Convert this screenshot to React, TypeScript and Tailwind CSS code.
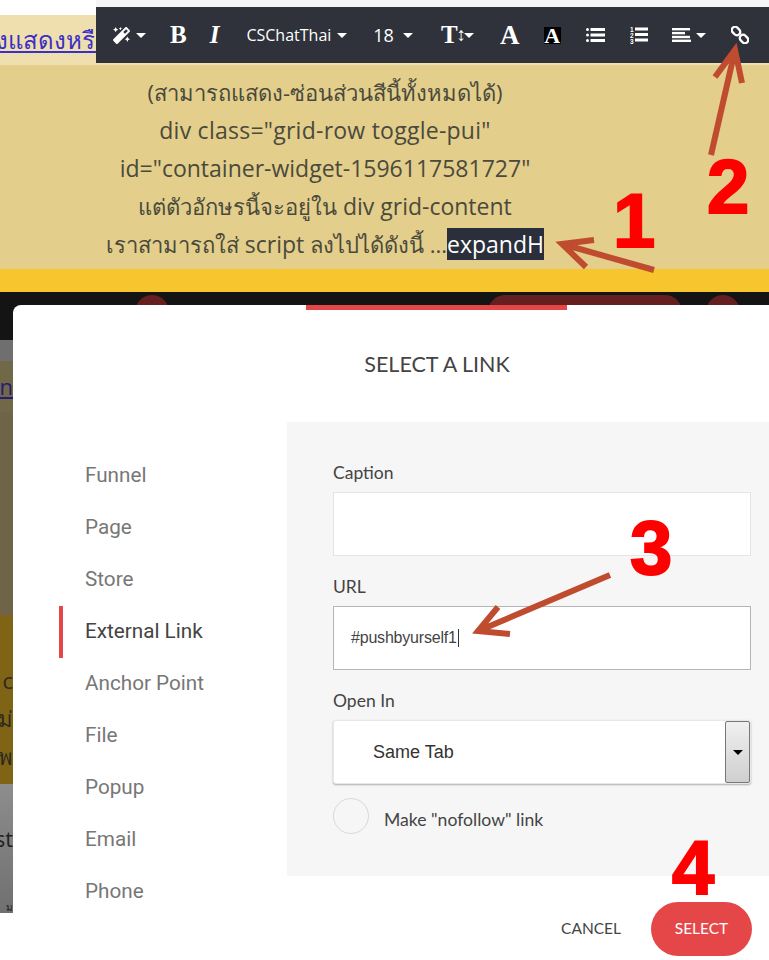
import { FaMagic } from "react-icons/fa";

const navItems = ["Funnel", "Page", "Store", "External Link", "Anchor Point", "File", "Popup", "Email", "Phone"];

function Caret({ className = "" }: { className?: string }) {
    return <span className={`inline-block h-0 w-0 border-x-[5px] border-t-[5px] border-x-transparent border-t-white ${className}`} />;
}

function ListUl({ className = "" }: { className?: string }) {
    return (
        <svg className={className} width="19" height="14" viewBox="0 0 19 14" fill="white">
            <rect x="0" y="0" width="3" height="3" rx="1.5" />
            <rect x="0" y="5.5" width="3" height="3" rx="1.5" />
            <rect x="0" y="11" width="3" height="3" rx="1.5" />
            <rect x="4.5" y="0" width="14.5" height="3" />
            <rect x="4.5" y="5.5" width="14.5" height="3" />
            <rect x="4.5" y="11" width="14.5" height="3" />
        </svg>
    );
}

function ListOl({ className = "" }: { className?: string }) {
    return (
        <svg className={className} width="18" height="18" viewBox="0 0 18 18" fill="white">
            <text x="0" y="5.5" fontSize="6.5" fontWeight="700" fontFamily="Liberation Sans">1</text>
            <text x="0" y="11.5" fontSize="6.5" fontWeight="700" fontFamily="Liberation Sans">2</text>
            <text x="0" y="17.5" fontSize="6.5" fontWeight="700" fontFamily="Liberation Sans">3</text>
            <rect x="5" y="1.5" width="13" height="3" />
            <rect x="5" y="7" width="13" height="3" />
            <rect x="5" y="12.5" width="13" height="3" />
        </svg>
    );
}

function AlignLeft({ className = "" }: { className?: string }) {
    return (
        <svg className={className} width="19" height="14" viewBox="0 0 19 14" fill="white">
            <rect x="0" y="0" width="18" height="2.4" />
            <rect x="0" y="3.9" width="13" height="2.4" />
            <rect x="0" y="7.8" width="18" height="2.4" />
            <rect x="0" y="11.6" width="19" height="2.4" />
        </svg>
    );
}

function LinkIcon({ className = "" }: { className?: string }) {
    return (
        <svg className={className} width="18" height="18" viewBox="0 0 18 18" fill="none" stroke="white" strokeWidth="2.4">
            <rect x="-4.6" y="-3.3" width="9.2" height="6.6" rx="3.3" transform="translate(5 5) rotate(45)" />
            <rect x="-4.6" y="-3.3" width="9.2" height="6.6" rx="3.3" transform="translate(13 13) rotate(45)" />
        </svg>
    );
}

function Toolbar() {
    return (
        <div className="absolute left-[96px] right-0 top-[7px] flex h-[56px] items-center bg-[#2f323b] text-white">
            <FaMagic className="ml-[17px] text-[17px]" />
            <Caret className="ml-[6px]" />
            <span className="ml-[24px] font-['Liberation_Serif'] text-[25px] font-bold">B</span>
            <span className="ml-[23px] font-['Liberation_Serif'] text-[25px] font-bold italic">I</span>
            <span className="ml-[27px] font-['Open_Sans'] text-[16px]">CSChatThai</span>
            <Caret className="ml-[6px]" />
            <span className="ml-[26px] font-['Open_Sans'] text-[18px]">18</span>
            <Caret className="ml-[9px]" />
            <span className="ml-[28px] font-['Liberation_Serif'] text-[25px] font-bold">T</span>
            <span className="-ml-[1px] font-['Liberation_Sans'] text-[19px] font-bold">↕</span>
            <Caret className="-ml-[2px]" />
            <span className="ml-[26px] font-['Liberation_Serif'] text-[27px] font-bold">A</span>
            <span className="ml-[24px] flex h-[17px] w-[17px] items-center justify-center overflow-hidden bg-black font-['Liberation_Serif'] text-[22px] font-bold">A</span>
            <ListUl className="ml-[25px]" />
            <ListOl className="ml-[25px]" />
            <AlignLeft className="ml-[24px]" />
            <Caret className="ml-[5px]" />
            <LinkIcon className="ml-[25px]" />
        </div>
    );
}

function Backdrop() {
    return (
        <div className="flex h-[573px] w-[13px] flex-col overflow-hidden font-['Open_Sans'] text-[22px] text-[#2c2a1c]">
            <div className="h-[21px] bg-[#6f6f6f]" />
            <div className="flex h-[51px] items-center justify-end bg-[#716848]">
                <span className="text-[#221c7a] underline">n</span>
            </div>
            <div className="h-[203px] bg-[#6f6448]" />
            <div className="flex h-[169px] flex-col items-end justify-center bg-[#7f6416] pt-[36px] leading-[38px]">
                <span>c</span>
                <span>ม่</span>
                <span>พ</span>
            </div>
            <div className="flex flex-1 flex-col items-end bg-gradient-to-b from-[#8d8d8d] to-[#707070] pt-[39px] text-[#222]">
                <span className="whitespace-nowrap leading-[30px]">st</span>
                <span className="mt-auto text-[10px] leading-[12px]">ม</span>
            </div>
        </div>
    );
}

function Field({ label, muted, children }: { label: string; muted?: boolean; children?: React.ReactNode }) {
    return (
        <div className="mb-[21px]">
            <div className="mb-[9px] h-5 font-['Lato'] text-[17.5px] leading-5 text-[#444]">{label}</div>
            <div className={`flex h-16 items-center border bg-white pl-[17px] ${muted ? "border-[#e5e5e5]" : "border-[#b5b5b5]"}`}>{children}</div>
        </div>
    );
}

function Modal() {
    return (
        <div className="absolute bottom-0 left-[13px] right-0 top-[305px] rounded-tl-lg bg-white">
            <div className="ml-[293px] h-[5px] w-[261px] bg-[#e54749]" />
            <div className="flex h-[112px] items-start justify-center pt-[41px] font-['Lato'] text-[21.5px] leading-[26px] text-[#444]">
                <span className="ml-[92px]">SELECT A LINK</span>
            </div>
            <div className="flex h-[454px] items-start">
                <nav className="w-[274px] pl-[46px] pt-[28px] font-['Roboto'] text-[20.7px]">
                    {navItems.map((item) => (
                        <div
                            key={item}
                            className={`flex h-[52px] items-center border-l-4 pl-[22px] ${
                                item === "External Link" ? "border-[#e54749] text-[#444]" : "border-transparent text-[#777]"
                            }`}
                        >
                            {item}
                        </div>
                    ))}
                </nav>
                <div className="h-[454px] flex-1 bg-[#f6f6f6] pl-[46px] pr-[18px] pt-[41px]">
                    <Field label="Caption" muted />
                    <Field label="URL">
                        <span className="font-['Liberation_Sans'] text-[16px] tracking-[-0.2px] text-[#444]">#pushbyurself1</span>
                        <span className="ml-[1px] h-[18px] w-px bg-[#333]" />
                    </Field>
                    <div className="mb-[9px] h-5 font-['Lato'] text-[17.5px] leading-5 text-[#444]">Open In</div>
                    <div className="flex h-16 items-stretch rounded-[3px] border border-[#e8e8e8] bg-white pl-[39px] shadow-[0_1px_2px_rgba(0,0,0,0.3)]">
                        <span className="flex flex-1 items-center font-['Liberation_Sans'] text-[18px] text-[#333]">Same Tab</span>
                        <span className="flex w-[25px] items-center justify-center rounded-[2px] border border-[#777] bg-gradient-to-b from-[#f0f0f0] to-[#cfcfcf]">
                            <span className="inline-block h-0 w-0 border-x-[5px] border-t-[5px] border-x-transparent border-t-black" />
                        </span>
                    </div>
                    <div className="mt-[14px] flex items-center">
                        <span className="h-[36px] w-[36px] rounded-full border border-[#d8d8d8]" />
                        <span className="ml-[15px] pt-[8px] font-['Lato'] text-[17.6px] text-[#444]">Make "nofollow" link</span>
                    </div>
                </div>
            </div>
            <div className="flex items-center justify-end pr-[17px] pt-[26px] font-['Lato'] text-[15.5px]">
                <span className="text-[#444]">CANCEL</span>
                <span className="ml-[30px] flex h-[54px] w-[101px] items-center justify-center rounded-full bg-[#e54749] text-white">SELECT</span>
            </div>
        </div>
    );
}

function Annotations() {
    const number = "absolute font-['Liberation_Sans'] text-[76px] leading-none font-bold text-[#ff0000] [-webkit-text-stroke:2px_#ff0000]";
    return (
        <>
            <svg className="pointer-events-none absolute left-0 top-0" width="769" height="960" fill="none" stroke="#c04c30" strokeWidth="6">
                <path d="M654 270 L562 244 M594 240 L562 244 L586 267" />
                <path d="M711 155 L735 50 M715 77 L735 50 L742 83" />
                <path d="M610 575 L478 631 M498 607 L478 631 L510 634" />
            </svg>
            <span className={`${number} left-[613px] top-[183px]`}>1</span>
            <span className={`${number} left-[707px] top-[149px]`}>2</span>
            <span className={`${number} left-[630px] top-[510px]`}>3</span>
            <span className={`${number} left-[672px] top-[830px]`}>4</span>
        </>
    );
}

export default function App() {
    const latin = "text-[23px]";
    return (
        <div className="relative h-[960px] w-[769px] overflow-hidden bg-white font-['Open_Sans']">
            <div className="flex h-[15px]">
                <div className="w-[96px] bg-white" />
                <div className="flex-1 bg-[#f6f4f4]" />
            </div>
            <div className="flex h-[50px] items-center overflow-hidden whitespace-nowrap bg-[#efdfae]">
                <a className="-ml-[4px] text-[24px] text-[#3a2fc8] underline">งแสดงหรือ</a>
            </div>
            <div className="h-[204px] bg-[#e3ce8b] pt-[8px]">
                <div className="w-[650px] text-center text-[22px] leading-[38px] text-[#4a4a3c]">
                    <p>(สามารถแสดง-ซ่อนส่วนสีนี้ทั้งหมดได้)</p>
                    <p className={`${latin} tracking-[0.25px]`}>div class="grid-row toggle-pui"</p>
                    <p className={latin}>id="container-widget-1596117581727"</p>
                    <p>
                        แต่ตัวอักษรนี้จะอยู่ใน <span className={latin}>div grid-content</span>
                    </p>
                    <p>
                        เราสามารถใส่ <span className={latin}>script</span> ลงไปได้ดังนี้ ...
                        <span className={`bg-[#2a2f3b] text-white ${latin}`}>expandH</span>
                    </p>
                </div>
            </div>
            <div className="h-[23px] bg-[#f7c52e]" />
            <div className="flex h-[48px] items-start bg-[#141414] pl-[135px] pt-[3px]">
                <span className="h-[34px] w-[34px] rounded-full bg-[#651f1f]" />
                <span className="ml-[319px] h-[34px] w-[194px] rounded-full bg-[#651f1f]" />
                <span className="ml-[24px] h-[34px] w-[34px] rounded-full bg-[#651f1f]" />
            </div>
            <Backdrop />
            <Toolbar />
            <Modal />
            <Annotations />
        </div>
    );
}
